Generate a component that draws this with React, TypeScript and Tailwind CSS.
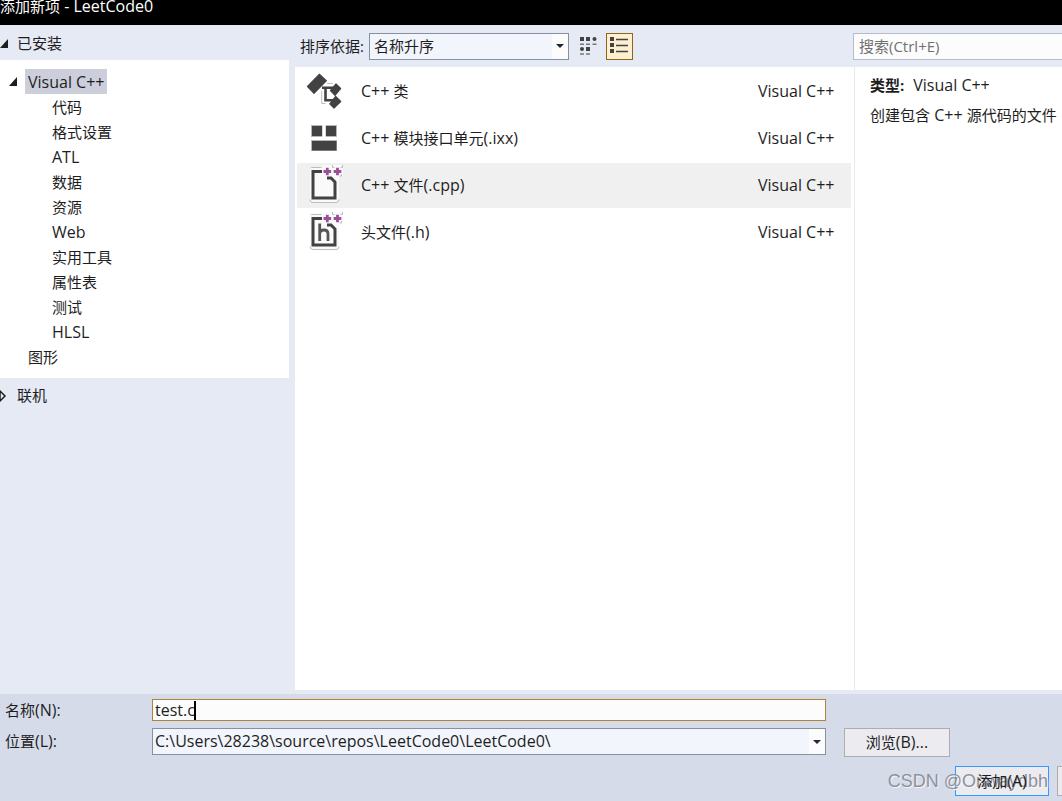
import { ReactNode } from 'react'

type Template = {
  name: string
  language: string
  icon: ReactNode
  selected?: boolean
}

const categories = [
  '代码',
  '格式设置',
  'ATL',
  '数据',
  '资源',
  'Web',
  '实用工具',
  '属性表',
  '测试',
  'HLSL',
]

// Latin runs are set one size larger so they balance with the Chinese glyphs
const Label = ({ text }: { text: string }) => (
  <span className="whitespace-pre">
    {text.split(/([\x20-\x7e]+)/).map((run, i) =>
      i % 2 ? (
        <span key={i} className="text-[16px]">
          {run}
        </span>
      ) : (
        run
      )
    )}
  </span>
)

const ClassIcon = () => (
  <svg viewBox="0 0 40 45" className="h-[45px] w-10 shrink-0" aria-hidden="true">
    <path
      d="M17.700 22v12.500h4M23 14.500h6"
      fill="none"
      stroke="#c0c0c0"
      strokeWidth="1"
    />
    <path
      d="M18 18.800h12M21.500 18v13.200h8"
      fill="none"
      stroke="#424242"
      strokeWidth="2.600"
    />
    <path
      d="M15.300 5.300l7 6.500L10 24.300 3.500 17.500zM32 15l4.600 4.500L31 26.300 26.500 21.500zM31.700 27.500l5 5L30 39l-4.200-4.200z"
      fill="#424242"
      stroke="#424242"
      strokeWidth="1.200"
      strokeLinejoin="round"
    />
  </svg>
)

const ModuleIcon = () => (
  <svg viewBox="0 0 40 45" className="h-[45px] w-10 shrink-0" aria-hidden="true">
    <path
      d="M7.500 9.500h10.500v11H7.500zM22 9.500h10.500v11H22zM7.500 24.500h25v10h-25z"
      fill="#424242"
      stroke="#b5b5b5"
      strokeWidth="1"
    />
    <path d="M8 10h10v10H8zM22 10h10v10H22zM8 25h24.500v9.500H8z" fill="#424242" />
  </svg>
)

const FileIcon = ({ header }: { header?: boolean }) => (
  <svg viewBox="0 0 40 45" className="h-[45px] w-10 shrink-0" aria-hidden="true">
    <path
      d="M8 4h11V2h20v11h-4v24q0 2-2 2H8q-2 0-2-2V6q0-2 2-2z"
      fill="#fafafa"
    />
    <path
      d="M6 36.500q0 3 3 3h23q3 0 3-3M6.500 5l1-.500h10M28.500 2v2.500h2M38.500 2v2.500h-2M35.500 13h2v-2"
      fill="none"
      stroke="#bdbdbd"
      strokeWidth="1"
    />
    <path
      d="M18 8.500H9v26.500h22V19l-4-4h-4"
      fill="none"
      stroke="#424242"
      strokeWidth="3"
    />
    <path
      d="M19.500 8.500h7.600M23.300 4.700v7.600M29.700 8.500h7.600M33.500 4.700v7.600"
      fill="none"
      stroke="#9b4f96"
      strokeWidth="2.800"
    />
    {header && (
      <path
        d="M15.700 13.500v17.500M15.700 24q0-4 4.300-4 4 0 4 4v7"
        fill="none"
        stroke="#555"
        strokeWidth="2.800"
      />
    )}
  </svg>
)

const templates: Template[] = [
  { name: 'C++ 类', language: 'Visual C++', icon: <ClassIcon /> },
  { name: 'C++ 模块接口单元(.ixx)', language: 'Visual C++', icon: <ModuleIcon /> },
  {
    name: 'C++ 文件(.cpp)',
    language: 'Visual C++',
    icon: <FileIcon />,
    selected: true,
  },
  { name: '头文件(.h)', language: 'Visual C++', icon: <FileIcon header /> },
]

const ExpandedArrow = () => (
  <svg viewBox="0 0 9 9" className="size-[9px] shrink-0" aria-hidden="true">
    <path d="M8 0v9H0z" fill="#1e1e1e" />
  </svg>
)

const DropArrow = () => (
  <span className="pointer-events-none absolute inset-y-px right-px flex w-4 items-center justify-center bg-[#fcfcfc]">
    <svg viewBox="0 0 8 4" className="h-1 w-2" aria-hidden="true">
      <path d="M0 0h8L4 4z" fill="#1b293e" />
    </svg>
  </span>
)

const Sidebar = () => (
  <nav className="flex w-[289px] shrink-0 flex-col">
    <button className="flex h-[35px] items-center gap-2 pt-px text-left">
      <ExpandedArrow />
      已安装
    </button>
    <ul className="h-[318px] bg-white pt-[9px]">
      <li>
        <button className="flex h-[25px] items-center gap-[7px] pl-[9px]">
          <ExpandedArrow />
          <span className="h-[25px] bg-[#cccedb] px-[3px] leading-[26px]">
            <Label text="Visual C++" />
          </span>
        </button>
        <ul>
          {categories.map((category) => (
            <li key={category}>
              <button className="block h-[25px] pl-[52px] leading-5">
                <Label text={category} />
              </button>
            </li>
          ))}
        </ul>
      </li>
      <li>
        <button className="block h-[25px] pl-7 leading-5">图形</button>
      </li>
    </ul>
    <button className="flex h-[35px] items-center gap-[10px] text-left">
      <svg viewBox="0 0 7 12" className="h-3 w-[7px]" aria-hidden="true">
        <path d="M0 1l5 5-5 5z" fill="none" stroke="#1e1e1e" strokeWidth="1.500" />
      </svg>
      联机
    </button>
  </nav>
)

const Toolbar = () => (
  <div className="flex h-[42px] items-center">
    <label htmlFor="sort" className="w-[74px] shrink-0 pl-[5px]">
      排序依据:
    </label>
    <div className="relative w-[200px]">
      <select
        id="sort"
        className="block h-[27px] w-full appearance-none border border-[#8591a2] bg-[#f2f5fc] pl-1"
      >
        <option>名称升序</option>
      </select>
      <DropArrow />
    </div>
    <button
      className="ml-[6px] flex size-[27px] items-center justify-center"
      aria-label="小图标"
    >
      <svg viewBox="0 0 17 19" className="h-[19px] w-[17px]" aria-hidden="true">
        <path d="M0 0h4v4H0zM6 0h4v4H6zM6 10h4v4H6z" fill="#424242" />
        <circle cx="14.500" cy="2" r="2" fill="#424242" />
        <circle cx="2" cy="12" r="2" fill="#424242" />
        <path
          d="M0 7.300h4M6 7.300h4M12.500 7.300h4M0 17h4M6 17h4"
          stroke="#777"
          strokeWidth="1.500"
        />
      </svg>
    </button>
    <button
      className="ml-1 flex size-[27px] items-center border border-[#8a6914] bg-[#fdefd0] pl-[3px]"
      aria-label="列表"
    >
      <svg viewBox="0 0 19 19" className="size-[19px]" aria-hidden="true">
        <path d="M0 0h4v4H0zM0 6h4v4H0zM0 12h4v4H0z" fill="#424242" />
        <path d="M6 2.500h12M6 8.500h12M6 14.500h12" stroke="#424242" strokeWidth="1.500" />
      </svg>
    </button>
    <input
      type="search"
      aria-label="搜索"
      placeholder="搜索(Ctrl+E)"
      className="ml-auto h-[27px] w-[209px] border border-r-0 border-[#b4bccb] bg-[#fcfcfc] px-[5px] placeholder:text-[#717171]"
    />
  </div>
)

const TemplateList = () => (
  <ul className="flex flex-1 flex-col gap-[2px] pt-[2px] pr-[3px] pl-[2px]">
    {templates.map(({ name, language, icon, selected }) => (
      <li key={name}>
        <button
          className={`flex h-[45px] w-full items-center pl-[7px] text-left ${selected ? 'bg-[#f0f0f0]' : ''}`}
        >
          {icon}
          <span className="flex-1 pl-[17px]">
            <Label text={name} />
          </span>
          <span className="w-[93px]">
            <Label text={language} />
          </span>
        </button>
      </li>
    ))}
  </ul>
)

const Footer = () => (
  <footer className="flex flex-col bg-[#d6dbe9] pt-[5px]">
    <div className="flex items-start pr-28">
      <div className="grid flex-1 grid-cols-[152px_1fr] items-center gap-y-[7px] pr-[18px]">
        <label htmlFor="name" className="pl-[5px] leading-[22px]">
          <Label text="名称(N):" />
        </label>
        <div className="relative">
          <input
            id="name"
            defaultValue="test.c"
            className="block h-[22px] w-full border border-[#b28336] bg-[#fcfcfc] px-[2px] text-[16px]"
          />
          <span className="absolute top-[2px] left-[42px] h-[19px] w-[2px] bg-black" />
        </div>
        <label htmlFor="location" className="pl-[5px]">
          <Label text="位置(L):" />
        </label>
        <div className="relative">
          <select
            id="location"
            className="block h-[27px] w-full appearance-none border border-[#8591a2] bg-[#f2f5fc] pl-[2px] text-[16px]"
          >
            <option>{'C:\\Users\\28238\\source\\repos\\LeetCode0\\LeetCode0\\'}</option>
          </select>
          <DropArrow />
        </div>
      </div>
      <button className="mt-[29px] h-[29px] w-[106px] border border-[#adadad] bg-[#ebebf0]">
        <Label text="浏览(B)..." />
      </button>
    </div>
    <div className="relative flex h-11 justify-end gap-2 pt-[9px]">
      <button className="h-[30px] w-[94px] border border-[#3399ff] bg-[#ebebf0]">
        {/* keeps the caption above the watermark */}
        <span className="relative z-10">
          <Label text="添加(A)" />
        </span>
      </button>
      <button
        className="h-[30px] w-[5px] border border-r-0 border-[#adadad] bg-[#ebebf0]"
        aria-label="取消"
      />
      <span className="pointer-events-none absolute top-3 right-[14px] font-['Liberation_Sans',sans-serif] text-lg leading-[25px] text-[#8e929c] [text-shadow:1px_1px_0_#f4f5f9]">
        CSDN @Onwaydbh
      </span>
    </div>
  </footer>
)

export default function App() {
  return (
    <div className="flex min-h-screen flex-col overflow-hidden bg-[#e6eaf5] font-['Open_Sans','Noto_Sans_CJK_SC',sans-serif] text-[15px] leading-[25px] text-[#1e1e1e]">
      <header className="h-[25px] bg-black text-white">
        <h1 className="-mt-[6px]">
          <Label text="添加新项 - LeetCode0" />
        </h1>
      </header>
      <div className="flex flex-1">
        <Sidebar />
        <main className="ml-[6px] flex flex-1 flex-col">
          <Toolbar />
          <div className="mb-1 flex flex-1 bg-white">
            <TemplateList />
            <aside className="w-[208px] border-l border-[#e6eaf5] pt-[6px] pl-[15px] whitespace-nowrap">
              <p>
                <b className="mr-[9px]">类型:</b>
                <Label text="Visual C++" />
              </p>
              <p className="mt-[5px]">
                <Label text="创建包含 C++ 源代码的文件" />
              </p>
            </aside>
          </div>
        </main>
      </div>
      <Footer />
    </div>
  )
}
